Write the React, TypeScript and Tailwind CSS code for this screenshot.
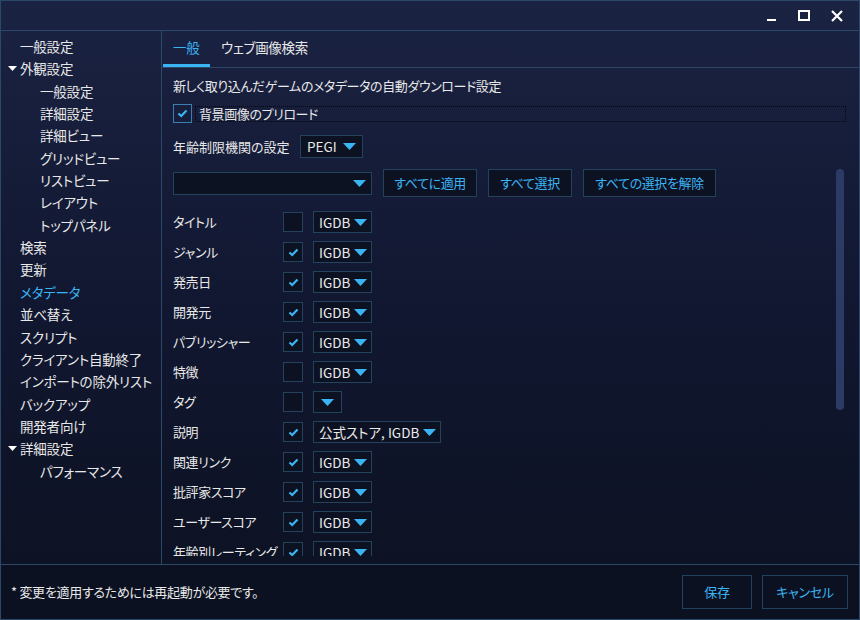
import React from 'react';

const font = 'font-["Noto_Sans_CJK_JP","Noto_Sans",sans-serif] [font-feature-settings:"palt"]';

function Check() {
  return (
    <svg width="11" height="9" viewBox="0 0 11 9">
      <polyline points="1.5,4.5 4.2,7 9.5,1.5" fill="none" stroke="#3ab4f2" strokeWidth="2.2" />
    </svg>
  );
}

function Tri({ w = 13 }: { w?: number }) {
  return (
    <svg width={w} height="7" viewBox="0 0 13 7">
      <polygon points="0,0 13,0 6.5,7" fill="#3ab4f2" />
    </svg>
  );
}

function Box({ checked }: { checked: boolean }) {
  return (
    <div className="relative z-10 w-[20px] h-[20px] border border-[#23425e] bg-[#0d1222] flex items-center justify-center">
      {checked && <Check />}
    </div>
  );
}

function Drop({ label }: { label: string }) {
  return (
    <div className={`h-[22px] border border-[#23425e] bg-[#0d1222] flex items-center gap-[4px] ${label ? 'pl-[5px] pr-[4px]' : 'px-[7px]'} text-[13.5px] tracking-normal text-[#ececec]`}>
      {label && <span>{label}</span>}
      <Tri />
    </div>
  );
}

const side: { t: string; lvl: number; arrow?: boolean; active?: boolean }[] = [
  { t: '一般設定', lvl: 0 },
  { t: '外観設定', lvl: 0, arrow: true },
  { t: '一般設定', lvl: 1 },
  { t: '詳細設定', lvl: 1 },
  { t: '詳細ビュー', lvl: 1 },
  { t: 'グリッドビュー', lvl: 1 },
  { t: 'リストビュー', lvl: 1 },
  { t: 'レイアウト', lvl: 1 },
  { t: 'トップパネル', lvl: 1 },
  { t: '検索', lvl: 0 },
  { t: '更新', lvl: 0 },
  { t: 'メタデータ', lvl: 0, active: true },
  { t: '並べ替え', lvl: 0 },
  { t: 'スクリプト', lvl: 0 },
  { t: 'クライアント自動終了', lvl: 0 },
  { t: 'インポートの除外リスト', lvl: 0 },
  { t: 'バックアップ', lvl: 0 },
  { t: '開発者向け', lvl: 0 },
  { t: '詳細設定', lvl: 0, arrow: true },
  { t: 'パフォーマンス', lvl: 1 },
];

const rows: { t: string; c: boolean; d: string }[] = [
  { t: 'タイトル', c: false, d: 'IGDB' },
  { t: 'ジャンル', c: true, d: 'IGDB' },
  { t: '発売日', c: true, d: 'IGDB' },
  { t: '開発元', c: true, d: 'IGDB' },
  { t: 'パブリッシャー', c: true, d: 'IGDB' },
  { t: '特徴', c: false, d: 'IGDB' },
  { t: 'タグ', c: false, d: '' },
  { t: '説明', c: true, d: '公式ストア, IGDB' },
  { t: '関連リンク', c: true, d: 'IGDB' },
  { t: '批評家スコア', c: true, d: 'IGDB' },
  { t: 'ユーザースコア', c: true, d: 'IGDB' },
  { t: '年齢別レーティング', c: true, d: 'IGDB' },
];

const btn = 'h-[28px] border border-[#23425e] bg-[#0d1222] text-[#3ab4f2] flex items-center justify-center';

export default function App() {
  return (
    <div className={`${font} w-[860px] h-[620px] border border-[#2c4868] bg-gradient-to-b from-[#1b2343] via-[#111730] to-[#0c1121] text-[#e8e8e8] flex flex-col overflow-hidden`}>
      {/* TITLE BAR */}
      <div className="h-[30px] shrink-0 flex items-center justify-end border-b border-[#2c4868]">
        <div className="w-[9px] h-[2px] bg-white mt-[8px] mr-[22px]" />
        <div className="w-[12px] h-[11px] border-2 border-white mr-[21px]" />
        <svg width="12" height="12" viewBox="0 0 12 12" className="mr-[16px]">
          <path d="M1 1 L11 11 M11 1 L1 11" stroke="white" strokeWidth="2.2" />
        </svg>
      </div>

      {/* MAIN */}
      <div className="flex-1 flex min-h-0">
        {/* SIDEBAR */}
        <div className="w-[161px] shrink-0 border-r border-[#2c4868] pt-[4px] text-[13.5px] tracking-[-0.2px]">
          {side.map((s, i) => (
            <div key={i} className={`h-[22.35px] flex items-center ${s.lvl === 1 ? 'pl-[39px]' : s.arrow ? 'pl-[7px]' : 'pl-[19px]'} ${s.active ? 'text-[#3ab4f2]' : ''}`}>
              {s.arrow && (
                <svg width="9" height="5" viewBox="0 0 9 5" className="mr-[3px]">
                  <polygon points="0,0 9,0 4.5,5" fill="white" />
                </svg>
              )}
              {s.t}
            </div>
          ))}
        </div>

        {/* CONTENT */}
        <div className="flex-1 flex flex-col min-w-0">
          <div className="h-[37px] shrink-0 border-b border-[#2c4868] flex items-end pl-[1px] text-[13.5px] tracking-[-0.3px]">
            <div className="w-[47px] h-[36px] flex flex-col">
              <div className="flex-1 flex items-center pl-[10px] text-[#3ab4f2]">一般</div>
              <div className="h-[3px] bg-[#3ab4f2]" />
            </div>
            <div className="h-[36px] pb-[3px] flex items-center pl-[11px]">ウェブ画像検索</div>
          </div>

          <div className="flex-1 relative overflow-hidden pl-[11px] pb-[8px]">
            <div className="h-full overflow-hidden text-[13px] tracking-[-0.4px]">
              <div className="h-[19px] mt-[8px] flex items-center">新しく取り込んだゲームのメタデータの自動ダウンロード設定</div>
              <div className="mt-[9px] flex items-center">
                <div className="w-[19px] h-[19px] border border-[#3a7fb0] flex items-center justify-center">
                  <Check />
                </div>
                <div className="ml-[3px] mr-[13px] flex-1 h-[16px] border border-dotted border-[#05070d] flex items-center pl-[3px]">背景画像のプリロード</div>
              </div>
              <div className="mt-[12px] h-[23px] flex items-center gap-[5px]">
                <span className="w-[122px] whitespace-nowrap tracking-normal">年齢制限機関の設定</span>
                <div className="h-[23px] border border-[#23425e] bg-[#0d1222] flex items-center gap-[6px] px-[6px] text-[13.5px] tracking-normal">
                  <span>PEGI</span>
                  <Tri />
                </div>
              </div>
              <div className="mt-[11px] flex items-center gap-[11px]">
                <div className="w-[199px] h-[23px] border border-[#23425e] bg-[#0d1222] flex items-center justify-end pr-[5px]">
                  <Tri />
                </div>
                <div className={`${btn} w-[94px]`}>すべてに適用</div>
                <div className={`${btn} w-[84px]`}>すべて選択</div>
                <div className={`${btn} w-[133px]`}>すべての選択を解除</div>
              </div>
              <div className="mt-[10px] flex flex-col">
                {rows.map((r, i) => (
                  <div key={i} className="h-[30px] flex items-center">
                    <span className="w-[110px] whitespace-nowrap">{r.t}</span>
                    <Box checked={r.c} />
                    <div className="ml-[10px]">
                      <Drop label={r.d} />
                    </div>
                  </div>
                ))}
              </div>
            </div>
            <div className="absolute right-[15px] top-[101px] w-[8px] h-[241px] rounded-full bg-[#2c3a66]" />
          </div>
        </div>
      </div>

      {/* FOOTER */}
      <div className="h-[55px] shrink-0 border-t border-[#2c4868] flex items-center pl-[10px] pr-[11px] text-[13px] tracking-[-0.3px] bg-[#0c1121]">
        <span className="flex-1">* 変更を適用するためには再起動が必要です。</span>
        <div className="w-[70px] h-[34px] border border-[#23425e] text-[#3ab4f2] mr-[10px] flex items-center justify-center">保存</div>
        <div className="w-[86px] h-[34px] border border-[#23425e] text-[#3ab4f2] flex items-center justify-center">キャンセル</div>
      </div>
    </div>
  );
}
